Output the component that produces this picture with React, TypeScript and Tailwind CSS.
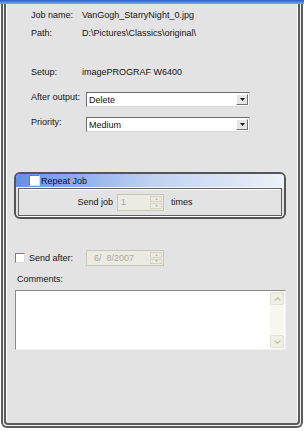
import React from "react";

function DropButton() {
  return (
    <div className="w-[12px] h-[11px] mr-[1px] flex items-center justify-center bg-[#e6e6e6] border border-t-white border-l-white border-r-[#6f6f6f] border-b-[#6f6f6f]">
      <svg width="5" height="3" viewBox="0 0 5 3">
        <path d="M0 0h5L2.5 3z" fill="#111" />
      </svg>
    </div>
  );
}

function Select({ value }: { value: string }) {
  return (
    <div className="w-[164px] h-[15px] flex items-center bg-white border border-t-[#6d6d6d] border-l-[#6d6d6d] border-r-[#d8d8d8] border-b-[#d8d8d8]">
      <span className="flex-1 pl-[2px] leading-[12px] text-[#111]">{value}</span>
      <DropButton />
    </div>
  );
}

function SpinButtons() {
  return (
    <div className="w-[12px] h-full flex flex-col gap-px py-px mr-px">
      <div className="flex-1 flex items-center justify-center bg-[#ecebe2] border border-[#d6d3c4]">
        <svg width="3" height="2" viewBox="0 0 3 2">
          <path d="M1.5 0L3 2H0z" fill="#b7b4a5" />
        </svg>
      </div>
      <div className="flex-1 flex items-center justify-center bg-[#ecebe2] border border-[#d6d3c4]">
        <svg width="3" height="2" viewBox="0 0 3 2">
          <path d="M0 0h3L1.5 2z" fill="#b7b4a5" />
        </svg>
      </div>
    </div>
  );
}

function Spin({ value, width, height, pad }: { value: string; width: string; height: string; pad: string }) {
  return (
    <div className={`${width} ${height} flex items-center bg-[#ebebe4] border border-[#c9c7ba]`}>
      <span className={`flex-1 ${pad} leading-[12px] text-[#aca899] whitespace-pre`}>{value}</span>
      <SpinButtons />
    </div>
  );
}

function Check({ size }: { size: string }) {
  return (
    <div
      className={`${size} shrink-0 bg-white border border-t-[#7b7b7b] border-l-[#7b7b7b] border-r-[#dcdcdc] border-b-[#dcdcdc]`}
    />
  );
}

export default function App() {
  return (
    <div
      className="w-[304px] h-[431px] bg-white flex flex-col overflow-hidden text-[9px] text-[#141414]"
      style={{ fontFamily: '"Liberation Sans", Arial, sans-serif' }}
    >
      <div className="h-[4px] shrink-0 bg-gradient-to-b from-[#2a5bc9] to-[#7ea6ee]" />
      <div className="flex-1 flex px-[1px] pb-[3px]">
        <div className="flex-1 flex bg-[#f4f4f4] border-x-2 border-b-2 border-[#5c5c5c] rounded-b-[6px] px-px pb-px">
          <div className="flex-1 flex flex-col bg-[#e3e3e3] border-x-2 border-b-2 border-[#5c5c5c] rounded-b-[4px] shadow-[inset_1px_0_0_#fff,inset_-1px_0_0_#fff]">
            <div className="pl-[25px] pt-[5px] flex flex-col">
              <div className="h-[12px] flex items-center leading-[12px]">
                <span className="w-[51px]">Job name:</span>
                <span>VanGogh_StarryNight_0.jpg</span>
              </div>
              <div className="h-[12px] mt-[6px] flex items-center leading-[12px]">
                <span className="w-[51px]">Path:</span>
                <span>D:\Pictures\Classics\original\</span>
              </div>
              <div className="h-[12px] mt-[27px] flex items-center leading-[12px]">
                <span className="w-[51px]">Setup:</span>
                <span>imagePROGRAF W6400</span>
              </div>
              <div className="mt-[14px] flex items-start">
                <span className="w-[55px] -mt-px leading-[12px]">After output:</span>
                <Select value="Delete" />
              </div>
              <div className="mt-[10px] flex items-start">
                <span className="w-[55px] -mt-px leading-[12px]">Priority:</span>
                <Select value="Medium" />
              </div>
            </div>

            <div className="ml-[8px] mt-[40px] w-[272px] h-[47px] flex flex-col border-2 border-[#555] rounded-[6px] overflow-hidden bg-[#e3e3e3] shadow-[inset_0_-1px_0_#fff]">
              <div className="h-[14px] shrink-0 flex items-center bg-gradient-to-r from-[#648fe5] via-[#bfd1f2] to-[#eef1f7] border-b border-[#f4f6fa]">
                <div className="ml-[13px]">
                  <Check size="w-[11px] h-[11px]" />
                </div>
                <span className="ml-px leading-[12px] text-[#111]">Repeat Job</span>
              </div>
              <div className="mx-[2px] h-[28px] flex items-center border border-[#606060] shadow-[inset_0_1px_0_#fff]">
                <span className="w-[94px] text-right leading-[12px]">Send job</span>
                <div className="ml-[4px]">
                  <Spin value="1" width="w-[47px]" height="h-[17px]" pad="pl-[3px]" />
                </div>
                <span className="ml-[7px] leading-[12px]">times</span>
              </div>
            </div>

            <div className="mt-[31px] pl-[9px] flex items-center h-[16px]">
              <Check size="w-[10px] h-[10px]" />
              <span className="ml-[4px] w-[57px] leading-[12px]">Send after:</span>
              <Spin value="6/  8/2007" width="w-[78px]" height="h-[16px]" pad="pl-[7px]" />
            </div>

            <div className="mt-[7px] pl-[11px] leading-[12px]">Comments:</div>

            <div className="ml-[9px] mt-[5px] w-[271px] h-[60px] flex bg-white border border-t-[#8a8a8a] border-l-[#8a8a8a] border-r-[#efefef] border-b-[#efefef]">
              <div className="flex-1" />
              <div className="w-[14px] mr-px my-px flex flex-col justify-between bg-[#f7f6ef]">
                <div className="h-[13px] flex items-center justify-center bg-[#f0efe6] border border-[#e2e0d3] rounded-[2px]">
                  <svg width="7" height="4" viewBox="0 0 7 4">
                    <path d="M0.5 3.5L3.5 0.7L6.5 3.5" stroke="#c4c1b1" strokeWidth="1.2" fill="none" />
                  </svg>
                </div>
                <div className="h-[13px] flex items-center justify-center bg-[#f0efe6] border border-[#e2e0d3] rounded-[2px]">
                  <svg width="7" height="4" viewBox="0 0 7 4">
                    <path d="M0.5 0.5L3.5 3.3L6.5 0.5" stroke="#c4c1b1" strokeWidth="1.2" fill="none" />
                  </svg>
                </div>
              </div>
            </div>
          </div>
        </div>
      </div>
    </div>
  );
}
